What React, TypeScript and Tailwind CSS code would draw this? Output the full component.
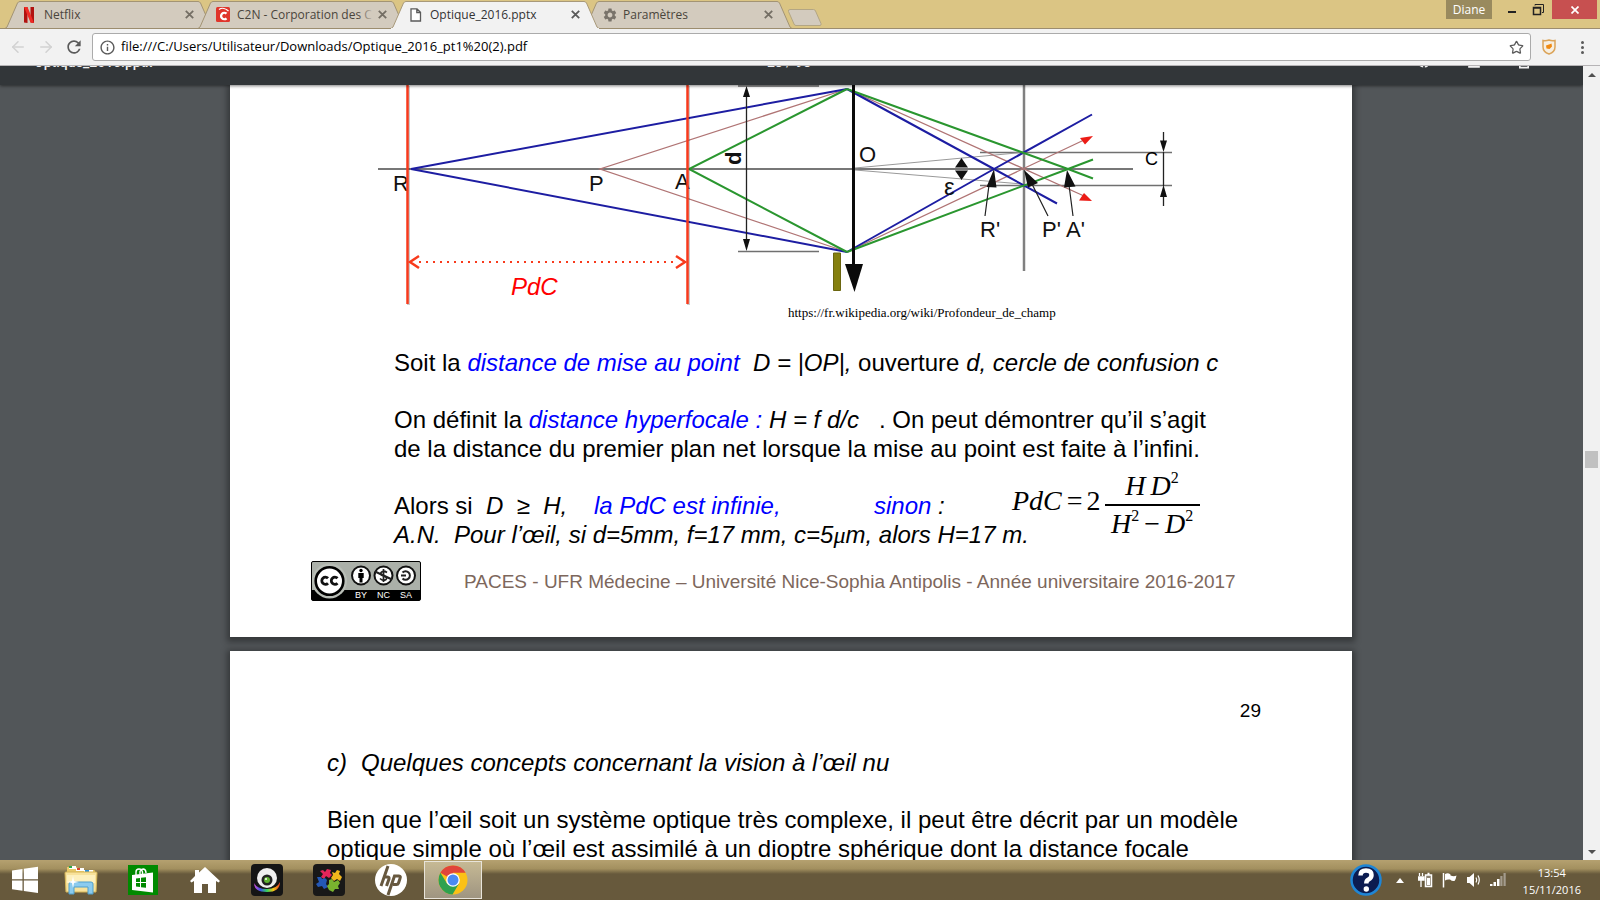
import React from 'react';
import { ArrowLeft, ArrowRight, Star } from 'lucide-react';
import { MdRefresh, MdInfoOutline, MdSettings, MdPrint, MdFileDownload, MdRotateRight } from 'react-icons/md';

interface TabProps {
  title: string;
  icon: React.ReactNode;
  active?: boolean;
  faded?: boolean;
}

function Tab({ title, icon, active = false, faded = false }: TabProps) {
  return (
    <div
      role="tab"
      aria-selected={active}
      className={`relative -ml-[15px] flex h-[29px] w-[208px] shrink-0 items-center pr-4 pl-[18px] ${active ? 'z-10' : ''}`}
    >
      <svg className="absolute inset-0" width="208" height="29" viewBox="0 0 208 29" aria-hidden="true">
        <path
          d="M0 28.500 L2 27 L12.500 3 Q13.500 1.500 15 1.500 H193 Q194.500 1.500 195.500 3 L206 27 L208 28.500"
          fill={active ? '#f2f2f2' : '#d3cbbe'}
          stroke={active ? '#a8997a' : '#a39474'}
        />
        <path d="M0 28.500 H208" stroke={active ? '#f2f2f2' : '#9c8d6f'} />
      </svg>
      <span className="relative flex w-[21px] shrink-0 items-center">{icon}</span>
      <span className={`relative min-w-0 flex-1 text-xs whitespace-nowrap ${active ? 'text-[#333]' : 'text-[#4a453c]'}`}>
        {title}
        {faded && <span className="absolute inset-y-0 right-0 w-4 bg-linear-to-r from-transparent to-[#d3cbbe]" />}
      </span>
      <button aria-label={`Fermer ${title}`} className="relative flex size-4 items-center justify-center">
        <svg width="9" height="9" viewBox="0 0 9 9">
          <path d="M.8 .8 8.200 8.200 M8.200 .8 .8 8.200" stroke={active ? '#5a5a5a' : '#746e64'} strokeWidth="1.800" />
        </svg>
      </button>
    </div>
  );
}

function NetflixIcon() {
  return (
    <svg width="12" height="16" viewBox="0 0 12 16">
      <path d="M1 0h3.500v16L1 15.500z M7.500 0H11v16l-3.500-.5z" fill="#b1120f" />
      <path d="M1 0h3.500L11 16l-3.500-.5z" fill="#ef2b25" />
    </svg>
  );
}

function C2NIcon() {
  return (
    <svg width="14" height="15" viewBox="0 0 14 15">
      <rect width="14" height="15" rx="1.500" fill="#e0352b" />
      <path d="M3 2.500C6 .5 10 1.500 12.500 4" stroke="#fff" strokeWidth="1.200" fill="none" />
      <path d="M10.500 6.700A3.200 3.200 0 1 0 10.500 11.300" stroke="#fff" strokeWidth="2.300" fill="none" />
    </svg>
  );
}

function BrowserChrome() {
  return (
    <header className="shrink-0">
      <div className="flex h-[29px] items-start justify-between border-b border-[#9c8d6f] bg-[#dbc584]">
        <div role="tablist" className="flex pl-[20px]">
          <Tab title="Netflix" icon={<NetflixIcon />} />
          <Tab title="C2N - Corporation des C" faded icon={<C2NIcon />} />
          <Tab
            title="Optique_2016.pptx"
            active
            icon={
              <svg width="12" height="14" viewBox="0 0 12 14" className="ml-px">
                <path d="M1 .8H7L10.500 4.300V13H1z M6.800 .8V4.500H10.500" fill="#fff" stroke="#5a5a5a" strokeWidth="1.300" />
              </svg>
            }
          />
          <Tab title="Paramètres" icon={<MdSettings size={16} className="text-[#79736a]" />} />
          <button aria-label="Nouvel onglet" className="mt-[6px] -ml-[5px]">
            <svg width="36" height="19" viewBox="0 0 36 19">
              <path d="M3 1.500H26.500Q28 1.500 28.500 3L34 15.500Q34.500 17.500 33 17.500H9Q7.500 17.500 7 16L1.500 3.500Q1 1.500 3 1.500z" fill="#d3cbbe" stroke="#b3a684" />
            </svg>
          </button>
        </div>
        <div className="flex pr-[3px]">
          <button className="mr-[8px] h-[19px] w-[46px] bg-[#998a5e] text-xs leading-[18px] text-white">Diane</button>
          <button aria-label="Réduire" className="flex h-[19px] w-[24px] items-center justify-center">
            <svg width="10" height="10" viewBox="0 0 10 10"><path d="M1 6h8v2H1z" fill="#222" /></svg>
          </button>
          <button aria-label="Restaurer" className="flex h-[19px] w-[28px] items-center justify-center">
            <svg width="12" height="12" viewBox="0 0 12 12">
              <path d="M3 1.500V.5H11.500V8.500H10" fill="none" stroke="#222" />
              <path d="M1.500 3.500H8.500V10.500H1.500z M1 4H9" fill="none" stroke="#222" strokeWidth="1.500" />
            </svg>
          </button>
          <button aria-label="Fermer" className="flex h-[19px] w-[45px] items-center justify-center bg-[#c75050]">
            <svg width="8" height="8" viewBox="0 0 8 8"><path d="M.5 .5 7.500 7.500 M7.500 .5 .5 7.500" stroke="#fff" strokeWidth="1.700" /></svg>
          </button>
        </div>
      </div>

      <div className="flex h-[37px] items-center border-b border-[#b6b4b6] bg-[#f2f2f2] pr-3 pl-[9px]">
        <button aria-label="Précédent" className="mr-[10px] text-[#d2d2d2]"><ArrowLeft size={18} strokeWidth={2} /></button>
        <button aria-label="Suivant" className="mr-[9px] text-[#d2d2d2]"><ArrowRight size={18} strokeWidth={2} /></button>
        <button aria-label="Actualiser" className="mr-[8px] text-[#5a5a5a]"><MdRefresh size={20} /></button>
        <div className="flex h-[28px] flex-1 items-center rounded-[3px] border border-[#ababab] bg-white px-[6px]">
          <MdInfoOutline size={17} className="shrink-0 text-[#5a5a5a]" />
          <input
            aria-label="Adresse"
            defaultValue="file:///C:/Users/Utilisateur/Downloads/Optique_2016_pt1%20(2).pdf"
            className="ml-[5px] min-w-0 flex-1 bg-transparent text-[13px] text-black outline-none"
          />
          <button aria-label="Ajouter aux favoris" className="text-[#5a5a5a]"><Star size={15} strokeWidth={2} /></button>
        </div>
        <button aria-label="Extension" className="ml-[11px]">
          <svg width="14" height="16" viewBox="0 0 14 16">
            <path d="M1 1.500Q4 2 7 1 Q10 2 13 1.500V8Q13 13 7 15Q1 13 1 8z" fill="#f6efe2" stroke="#dba45a" strokeWidth="1.500" />
            <path d="M4 6.500 7 5.500 9.500 4.500 10 7.500 7.500 10 4.500 9.500z" fill="#f08a12" />
          </svg>
        </button>
        <button aria-label="Menu" className="ml-[21px] flex flex-col items-center gap-[2px] px-1">
          <span className="size-[3px] rounded-full bg-[#5a5a5a]" />
          <span className="size-[3px] rounded-full bg-[#5a5a5a]" />
          <span className="size-[3px] rounded-full bg-[#5a5a5a]" />
        </button>
      </div>
    </header>
  );
}

// Ray diagram of the depth of field
function OpticsDiagram() {
  return (
    <svg width="800" height="220" viewBox="376 85 800 220" role="img" aria-label="Profondeur de champ">
      <g fill="none">
        <path d="M378 169H1133" stroke="#4a4a4a" strokeWidth="1.500" />
        <path d="M1024 85V271" stroke="#808080" strokeWidth="2.500" />
        <path d="M980 152.500H1172M980 185.500H1172M738 86H819M738 251.500H819" stroke="#707070" strokeWidth="1.500" />
        <path d="M855 168 1022 152.500M855 170 1022 184" stroke="#999" />
        <g stroke="#b07474" strokeWidth="1.300">
          <path d="M847 89 600 169 847 252M847 89 1084 196M847 252 1084 140" />
        </g>
        <g stroke="#1d1da2" strokeWidth="2">
          <path d="M847 89 411 169 847 252M847 89 994 169 1057 203.500M847 252 994 169 1092 114.500" />
        </g>
        <g stroke="#2a962f" strokeWidth="2">
          <path d="M847 89 689 169 847 252M847 89 1068 169 1093 178.500M847 252 1068 169 1093 159.500" />
        </g>
        <path d="M746.500 90V247M1163.500 132V145M1163.500 192V206M1163.500 152V186" stroke="#222" strokeWidth="1.300" />
        <path d="M853.500 85V270" stroke="#0a0a0a" strokeWidth="3" />
        <path d="M989 185 985 216M1032 184 1048 216M1069 185 1073 216" stroke="#222" strokeWidth="1.200" />
      </g>
      <path d="M833.500 253H840.500V290.500H833.500z" fill="#85800e" stroke="#6b6610" />
      <path d="M845 264H863L854.500 292z" fill="#0a0a0a" />
      <g fill="#111">
        <path d="M746.500 86 750 97H743zM746.500 251 750 239H743z" />
        <path d="M1163.500 152 1167 140.500H1160zM1163.500 185 1167 197H1160z" />
        <path d="M961.500 158 968 167.500H955zM961.500 180 968 170.500H955z" />
        <path d="M994 169 996.500 187.500 986.500 187zM1024 170 1038 183 1028 187.500zM1067 170 1075.500 186.500 1064 187.500z" />
      </g>
      <path d="M1093 136 1085 144.500 1080 138zM1092 201 1079 200.500 1084 193z" fill="#ec1c16" />

      <g className="font-['Liberation_Sans']" fontSize="22" fill="#111">
        <text x="393" y="191">R</text>
        <text x="589" y="191">P</text>
        <text x="675" y="189">A</text>
        <text x="859" y="162">O</text>
        <text x="980" y="237">R'</text>
        <text x="1042" y="237">P'</text>
        <text x="1066" y="237">A'</text>
        <text x="944" y="195" fontSize="24">ε</text>
        <text transform="translate(741 165) rotate(-90)" fontWeight="bold">d</text>
        <text x="1145" y="165" fontSize="18" fill="#000">C</text>
      </g>

      <g stroke="#f83a1c" fill="none">
        <path d="M408.500 86V305M688.500 86V305" stroke="#000" strokeOpacity=".2" strokeWidth="3" />
        <path d="M407.500 85V304M687.500 85V304" strokeWidth="2.500" />
        <path d="M419 262H676" strokeWidth="2" strokeDasharray="2 5" />
        <path d="M419 256 410 262 419 268M676 256 685 262 676 268" strokeWidth="2.500" />
      </g>
      <text x="511" y="295" fontSize="24" fill="#f00" className="font-['Liberation_Sans'] italic">PdC</text>
    </svg>
  );
}

function Formula() {
  return (
    <div className="flex items-center pb-px font-['Liberation_Serif'] text-[28px] leading-[36px] not-italic">
      <span className="flex pb-[8px]">
        <i>PdC</i>
        <span className="ml-[5px]">=</span>
        <span className="ml-[4px]">2</span>
      </span>
      <span className="ml-[4px] flex w-[95px] flex-col items-center">
        <span className="flex w-full justify-center border-b-2 border-black">
          <i className="pr-[5px]">H</i>
          <i>D</i>
          <sup className="top-0 text-base leading-[20px]">2</sup>
        </span>
        <span className="flex w-full justify-center">
          <i>H</i>
          <sup className="top-0 text-base leading-[20px]">2</sup>
          <span className="px-[5px]">−</span>
          <i>D</i>
          <sup className="top-0 text-base leading-[20px]">2</sup>
        </span>
      </span>
    </div>
  );
}

function LicenseBadge() {
  return (
    <svg width="110" height="40" viewBox="0 0 110 40" role="img" aria-label="CC BY NC SA">
      <rect x=".5" y=".5" width="109" height="39" rx="1.500" fill="#abb0a9" stroke="#000" />
      <path d="M1 29H109V39H1z" fill="#000" />
      <circle cx="18.500" cy="20" r="17.500" fill="#b9beb7" />
      <circle cx="18.500" cy="20" r="13.800" fill="#fff" stroke="#000" strokeWidth="2.600" />
      <path d="M17 17.300A3.600 3.600 0 1 0 17 22.300M26.500 17.300A3.600 3.600 0 1 0 26.500 22.300" fill="none" stroke="#111" strokeWidth="2.800" />
      <g fill="#fff" stroke="#111" strokeWidth="2">
        <circle cx="50" cy="14.500" r="9" />
        <circle cx="72.500" cy="14.500" r="9" />
        <circle cx="95" cy="14.500" r="9" />
      </g>
      <circle cx="50" cy="9.500" r="1.700" fill="#000" />
      <path d="M47.300 12H52.700V17H51.500V21.500H48.500V17H47.300z" fill="#000" />
      <g fill="none" stroke="#222">
        <path d="M76 11.500Q72.500 9 70 11.500Q69 14 73 15Q77 16.500 75 18.500Q72 20.500 69 17.500M72.500 8V21" strokeWidth="1.700" />
        <path d="M64 10.500 81 18.500" strokeWidth="2" />
        <path d="M91.500 11.500A4.300 4.300 0 1 1 91.500 17.500M90 14.500H95" strokeWidth="2" />
      </g>
      <g fill="#fff" fontSize="9" textAnchor="middle" className="font-['Liberation_Sans']">
        <text x="50" y="37">BY</text>
        <text x="72.500" y="37">NC</text>
        <text x="95" y="37">SA</text>
      </g>
    </svg>
  );
}

function PdfViewer() {
  return (
    <main className="flex min-h-0 flex-1 bg-[#525659]">
      <div className="flex min-w-0 flex-1 flex-col overflow-hidden">
        {/* Toolbar, sliding out of view */}
        <div className="z-10 flex h-[19px] shrink-0 items-start justify-between overflow-hidden bg-[#323639] pr-[49px] pl-[34px] font-[Roboto] text-sm text-[#f1f1f1] shadow-[0_1px_3px_rgba(0,0,0,0.5)]">
          <span className="-mt-[12px] w-[130px] leading-4 font-medium">Optique_2016.pptx</span>
          <span className="-mt-[12px] leading-4">28 / 98</span>
          <span className="-mt-[15px] flex gap-[30px]">
            <button aria-label="Pivoter"><MdRotateRight size={20} /></button>
            <button aria-label="Télécharger"><MdFileDownload size={20} /></button>
            <button aria-label="Imprimer"><MdPrint size={20} /></button>
          </span>
        </div>

        <div className="flex min-h-0 flex-1 flex-col items-center gap-[14px] overflow-hidden pr-px font-['Liberation_Sans'] text-2xl leading-[29px] text-black">
          <article className="w-[1122px] max-w-full shrink-0 bg-white pb-[36px] shadow-[0_2px_6px_3px_rgba(0,0,0,0.35)]">
            <div className="pl-[146px]"><OpticsDiagram /></div>
            <a
              href="https://fr.wikipedia.org/wiki/Profondeur_de_champ"
              className="ml-[558px] block w-fit font-['Liberation_Serif'] text-[13px] leading-4"
            >
              https://fr.wikipedia.org/wiki/Profondeur_de_champ
            </a>
            <div className="mt-[27px] pl-[164px] whitespace-pre">
              <p>
                Soit la <i className="text-[#00f]">distance de mise au point</i>  <i>D = |OP|,</i> ouverture <i>d, cercle de confusion c</i>
              </p>
              <p className="mt-[28px]">
                On définit la <i className="text-[#00f]">distance hyperfocale :</i> <i>H = f d/c</i>   . On peut démontrer qu’il s’agit
              </p>
              <p>de la distance du premier plan net lorsque la mise au point est faite à l’infini.</p>
              <div className="mt-[28px] flex h-[29px] items-center italic">
                <p className="w-[480px]"><span className="not-italic">Alors si</span>  D  ≥  H,    <span className="text-[#00f]">la PdC est infinie,</span></p>
                <p className="w-[138px]"><span className="text-[#00f]">sinon</span> :</p>
                <Formula />
              </div>
              <p className="italic">A.N.  Pour l’œil, si d=5mm, f=17 mm, c=5<span className="font-['Liberation_Serif']">μ</span>m, alors H=17 m.</p>
            </div>
            <footer className="mt-[11px] flex h-10 items-center gap-[43px] pl-[81px] text-[19px] text-[#7d675c]">
              <LicenseBadge />
              <span>PACES - UFR Médecine – Université Nice-Sophia Antipolis - Année universitaire 2016-2017</span>
            </footer>
          </article>

          <article className="h-[400px] w-[1122px] max-w-full shrink-0 bg-white pt-[45px] pl-[97px] shadow-[0_2px_6px_3px_rgba(0,0,0,0.35)]">
            <p className="pr-[91px] text-right text-[19px] leading-[29px]">29</p>
            <h2 className="mt-[23px] flex gap-[14px] italic"><span>c)</span><span>Quelques concepts concernant la vision à l’œil nu</span></h2>
            <p className="mt-[28px]">
              Bien que l’œil soit un système optique très complexe, il peut être décrit par un modèle<br />
              optique simple où l’œil est assimilé à un dioptre sphérique dont la distance focale
            </p>
          </article>
        </div>
      </div>

      {/* Scrollbar */}
      <div className="flex w-[17px] shrink-0 flex-col items-center bg-[#f1f1f1]">
        <span className="flex h-[17px] items-center"><svg width="8" height="4" viewBox="0 0 8 4"><path d="M4 0 8 4H0z" fill="#505050" /></svg></span>
        <span className="grow-[50]" />
        <span className="h-[17px] w-[13px] bg-[#c1c1c1]" />
        <span className="grow-[51]" />
        <span className="flex h-[17px] items-center"><svg width="8" height="4" viewBox="0 0 8 4"><path d="M0 0H8L4 4z" fill="#505050" /></svg></span>
      </div>
    </main>
  );
}

function WindowsIcon() {
  return (
    <svg width="28" height="28" viewBox="0 0 28 28">
      <path d="M1 4.500 11.500 3V13.300H1zM12.800 2.800 27 .8V13.300H12.800zM1 14.600H11.500V24.800L1 23.300zM12.800 14.600H27V27L12.800 25z" fill="#fff" />
    </svg>
  );
}

function FolderIcon() {
  return (
    <svg width="34" height="30" viewBox="0 0 34 30">
      <path d="M3 2H13L15 5H30Q31 5 31 7V10H3z" fill="#e9c967" />
      <path d="M5 1H12V4H5z" fill="#fff" /><path d="M5 1H8V3H5z" fill="#2ba84a" />
      <path d="M12 3H20V6H12z" fill="#fff" /><path d="M13 3H16V5H13z" fill="#d9422b" />
      <path d="M20 5H29V8H20z" fill="#fff" /><path d="M21 5H25V7H21z" fill="#2c8fd6" />
      <path d="M1 8Q1 7 2 7H32Q33 7 33 8L32 27H2z" fill="#f8e29b" stroke="#d5b558" />
      <path d="M3 10H31V18H3z" fill="#fdf0bd" />
      <path d="M5 29V19Q5 17 7 17H27Q29 17 29 19V29H24V22H10V29z" fill="#8ccbee" stroke="#4f9fcd" />
      <path d="M9 11 10 16 15 17 10 18 9 23 8 18 3 17 8 16z" fill="#fff" />
    </svg>
  );
}

function StoreIcon() {
  return (
    <svg width="30" height="30" viewBox="0 0 30 30">
      <path d="M0 0H30V30H0z" fill="#008a00" />
      <path d="M4 10 25 7.500V27.500L4 25z" fill="#fff" />
      <path d="M8 10V7Q8 4 11 4Q14 4 14.500 7V9M12 9V6.500Q13 4 15.500 4Q18 4.500 18 8" fill="none" stroke="#fff" strokeWidth="1.400" />
      <path d="M8 13.500 12 13V17H8zM13 12.800 18 12.200V17H13zM8 18H12V22L8 21.500zM13 18H18V22.800L13 22.200z" fill="#008a00" />
    </svg>
  );
}

function WebcamIcon() {
  return (
    <svg width="32" height="32" viewBox="0 0 32 32">
      <defs>
        <linearGradient id="rainbow">
          <stop stopColor="#d94bd6" />
          <stop offset=".25" stopColor="#3b57e6" />
          <stop offset=".5" stopColor="#37d35c" />
          <stop offset=".75" stopColor="#f5c518" />
          <stop offset="1" stopColor="#ef3b24" />
        </linearGradient>
      </defs>
      <rect width="32" height="32" rx="4" fill="#151515" />
      <path d="M3 19Q6 25 16 25Q26 25 29 18Q29 28 16 28Q3 28 3 19z" fill="url(#rainbow)" />
      <circle cx="16" cy="14" r="10" fill="#efefef" />
      <circle cx="16" cy="16" r="5.500" fill="#222" />
      <circle cx="16" cy="16" r="3" fill="#5fb331" />
      <circle cx="15" cy="15" r="1" fill="#fff" />
    </svg>
  );
}

function PuzzleIcon() {
  return (
    <svg width="32" height="32" viewBox="0 0 32 32">
      <rect width="32" height="32" rx="4" fill="#181818" />
      <path d="M7 7 10 6 12 8 14 5 18 6 17 9 19 11 16 14 13 12 11 15 8 13 10 10z" fill="#e5255a" />
      <path d="M19 8 22 9 24 6 27 7 26 10 29 13 27 17 24 15 21 17 18 14 20 11z" fill="#f3b61c" />
      <path d="M4 13 8 13 9 15 12 14 14 16 13 20 15 23 11 25 9 22 5 23 3 20 6 18z" fill="#2458b5" />
      <path d="M16 16 19 15 21 18 25 16 27 19 25 22 26 25 22 25 20 28 16 26 14 22 16 20z" fill="#79b32f" />
    </svg>
  );
}

function HpIcon() {
  return (
    <svg width="32" height="32" viewBox="0 0 32 32">
      <circle cx="16" cy="16" r="16" fill="#fff" />
      <g fill="none" stroke="#67583f" strokeWidth="3">
        <path d="M13 2 6 22M9 13H12.500Q14.500 13 14 15L11.500 22" />
        <path d="M13 31 19.500 12H24Q26 12 25 14.500L23.500 19Q23 20.500 21.500 20.500H18" />
      </g>
    </svg>
  );
}

function ChromeIcon() {
  return (
    <svg width="30" height="30" viewBox="0 0 30 30">
      <circle cx="15" cy="15" r="14.500" fill="#fbc116" />
      <path d="M15 15 2.400 7.800A14.500 14.500 0 0 1 27.600 7.800H15z" fill="#e0453a" />
      <path d="M2.400 7.800A14.500 14.500 0 0 0 14.500 29.500L21 18.500 9 18.500z" fill="#2fa14f" />
      <circle cx="15" cy="15" r="6.800" fill="#fff" />
      <circle cx="15" cy="15" r="5.500" fill="#4a8af4" />
    </svg>
  );
}

const shortcuts = [
  { label: 'Explorateur de fichiers', icon: <FolderIcon /> },
  { label: 'Windows Store', icon: <StoreIcon /> },
  {
    label: 'Accueil',
    icon: (
      <svg width="32" height="28" viewBox="0 0 32 28">
        <path d="M16 1 31 15 29.500 16.500 27 15V27H19V18H13V27H5V15L2.500 16.500 1 15 6 10V4H10V6.500z" fill="#fff" />
      </svg>
    )
  },
  { label: 'CyberLink YouCam', icon: <WebcamIcon /> },
  { label: 'Jeux', icon: <PuzzleIcon /> },
  { label: 'HP', icon: <HpIcon /> }
];

function Taskbar() {
  return (
    <footer className="flex h-10 shrink-0 items-center justify-between bg-linear-to-b from-[#b5a170] from-0% via-[#a3905f] via-22% to-[#67593c] to-35% text-white">
      <nav className="flex items-center">
        <button aria-label="Démarrer" className="flex w-[50px] justify-center"><WindowsIcon /></button>
        {shortcuts.map((item) => (
          <button key={item.label} aria-label={item.label} className="flex w-[62px] justify-center">{item.icon}</button>
        ))}
        <button aria-label="Google Chrome" className="ml-[2px] flex h-[38px] w-[58px] items-center justify-center border border-[#e8e4da] bg-linear-to-b from-[#c6b994] to-[#9f9581]">
          <ChromeIcon />
        </button>
      </nav>

      <div className="flex items-center pr-[19px]">
        <button aria-label="Aide" className="mr-[14px]">
          <svg width="32" height="32" viewBox="0 0 32 32">
            <circle cx="16" cy="16" r="14.500" fill="#0c1c50" stroke="#1f86d6" strokeWidth="2.500" />
            <path d="M10.500 11.500Q10.500 6.500 16 6.500Q21.500 6.500 21.500 11Q21.500 14 18.500 15.500Q16.300 16.600 16.300 19.500" fill="none" stroke="#fff" strokeWidth="4.500" />
            <circle cx="16.300" cy="25" r="2.700" fill="#fff" />
          </svg>
        </button>
        <button aria-label="Icônes cachées" className="mr-[14px]">
          <svg width="8" height="5" viewBox="0 0 8 5"><path d="M4 0 8 5H0z" fill="#fff" /></svg>
        </button>
        <svg className="mr-[9px]" width="15" height="16" viewBox="0 0 15 16" aria-label="Batterie">
          <path d="M1.500 1V4M4.500 1V4M0 5H6V8H0zM3 8V15" stroke="#fff" strokeWidth="1.300" fill="#fff" />
          <path d="M7.500 3H13.500V14.500H7.500zM9.500 1.500H11.500" stroke="#fff" strokeWidth="1.500" fill="#8b8272" />
          <path d="M9 6H12V13H9z" fill="#fff" />
        </svg>
        <svg className="mr-[9px]" width="15" height="16" viewBox="0 0 15 16" aria-label="Centre de maintenance">
          <path d="M1.500 1V15.500" stroke="#fff" strokeWidth="1.500" />
          <path d="M3 2Q6 .5 8.500 2.500V3.500Q12 5 14.500 3.500Q14 7 12.500 9Q10 9.500 8 7.500Q5 7 3 8.500z" fill="#fff" />
        </svg>
        <svg className="mr-[8px]" width="16" height="16" viewBox="0 0 16 16" aria-label="Volume">
          <path d="M1 5H3.500L8 1V15L3.500 11H1z" fill="#fff" />
          <path d="M10 5.500Q11.500 8 10 10.500M12 3.500Q14.500 8 12 12.500" fill="none" stroke="#fff" strokeWidth="1.200" />
        </svg>
        <svg className="mr-[17px]" width="16" height="14" viewBox="0 0 16 14" aria-label="Réseau">
          <path d="M0 11H2.500V13H0zM3.500 9H6V13H3.500zM7 6H9.500V13H7z" fill="#fff" />
          <path d="M10.300 3H12.500V13H10.300zM13.500 0H15.700V13H13.500z" fill="#a49c8d" />
        </svg>
        <div className="pt-[2px] text-center text-[11px] leading-[17px]">
          <p>13:54</p>
          <p>15/11/2016</p>
        </div>
      </div>
    </footer>
  );
}

export default function App() {
  return (
    <div className="flex h-screen flex-col overflow-hidden font-['Open_Sans',sans-serif]">
      <BrowserChrome />
      <PdfViewer />
      <Taskbar />
    </div>
  );
}
